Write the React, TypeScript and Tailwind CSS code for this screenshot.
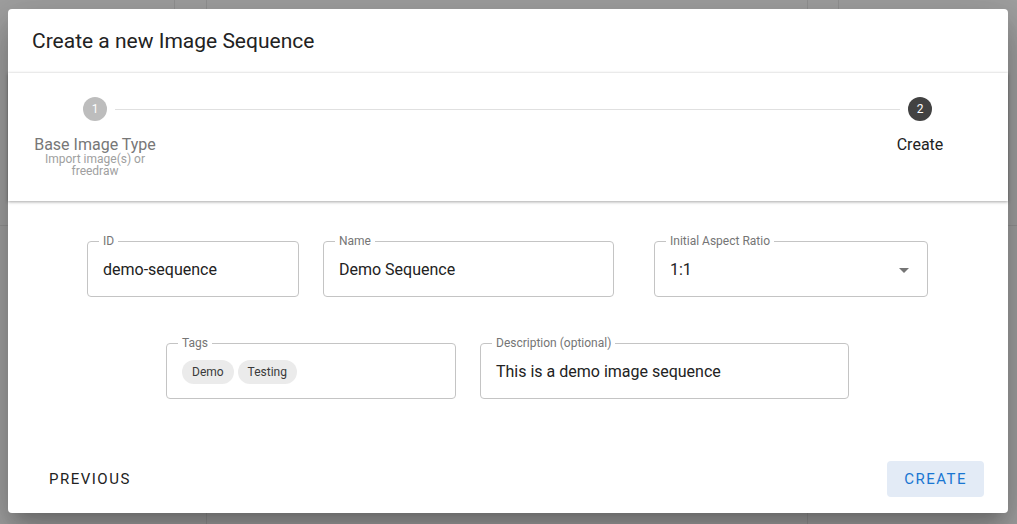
import React from "react";

function Field({ label, width, children }: { label: string; width: string; children: React.ReactNode }) {
  return (
    <div className={`relative h-[56px] ${width} rounded-[4px] border border-[#c4c4c4] flex items-center px-[15px] pt-[1px]`}>
      <span className="absolute left-[11px] top-[-8px] bg-white px-[4px] text-[12px] leading-[14px] text-[#757575]">
        {label}
      </span>
      {children}
    </div>
  );
}

function Chip({ label }: { label: string }) {
  return (
    <span className="h-[24px] rounded-full bg-[#ebebeb] px-[10px] flex items-center text-[12px] text-[#3a3a3a]">
      {label}
    </span>
  );
}

export default function App() {
  return (
    <div className="relative h-[524px] w-full overflow-hidden bg-[#a0a0a0] font-['Roboto',sans-serif]">
      {/* page behind the backdrop */}
      <div className="flex h-full">
        <div className="flex w-[207px] flex-col border-r border-[#939393]">
          <div className="flex h-[226px] border-b border-[#939393]">
            <div className="w-[175px] border-r border-[#939393]" />
          </div>
        </div>
        <div className="flex-1" />
        <div className="flex w-[210px] flex-col border-l border-[#939393]">
          <div className="flex h-[226px] justify-end border-b border-[#939393]">
            <div className="w-[179px] border-l border-[#939393]" />
          </div>
        </div>
      </div>

      {/* dialog */}
      <div className="absolute inset-0 pl-[8px] pt-[9px]">
        <div className="flex h-[504px] w-[1000px] flex-col rounded-[4px] bg-white shadow-[0_11px_15px_-7px_rgba(0,0,0,0.2),0_24px_38px_3px_rgba(0,0,0,0.14),0_9px_46px_8px_rgba(0,0,0,0.12)]">
          <h2 className="px-[24px] py-[16px] text-[21px] font-normal leading-[32px] text-[#222222]">
            Create a new Image Sequence
          </h2>

          {/* stepper */}
          <div className="px-[24px] pt-[24px] pb-[24px] shadow-[0_1px_3px_rgba(0,0,0,0.35),0_-1px_2px_rgba(0,0,0,0.04)]">
            <div className="flex items-center pl-[51px] pr-[52px]">
              <span className="flex h-[24px] w-[24px] items-center justify-center rounded-full bg-[#bdbdbd] text-[12px] text-white">
                1
              </span>
              <span className="mx-[8px] h-px flex-1 bg-[#e0e0e0]" />
              <span className="flex h-[24px] w-[24px] items-center justify-center rounded-full bg-[#424242] text-[12px] text-white">
                2
              </span>
            </div>
            <div className="flex justify-between">
              <div className="flex w-[126px] flex-col items-center text-center">
                <span className="mt-[14px] text-[16px] leading-[20px] text-[#777777]">Base Image Type</span>
                <span className="mt-[-2px] w-[110px] text-[12px] leading-[12px] text-[#a0a0a0]">
                  Import image(s) or freedraw
                </span>
              </div>
              <div className="flex w-[128px] flex-col items-center text-center">
                <span className="mt-[14px] text-[16px] leading-[20px] text-[#222222]">Create</span>
              </div>
            </div>
          </div>

          {/* form */}
          <div className="flex flex-1 flex-col pt-[40px] pr-[1px] text-[16px] text-[#222222]">
            <div className="flex justify-center">
              <Field label="ID" width="w-[212px]">
                <span>demo-sequence</span>
              </Field>
              <div className="ml-[24px]">
                <Field label="Name" width="w-[291px]">
                  <span>Demo Sequence</span>
                </Field>
              </div>
              <div className="ml-[40px]">
                <Field label="Initial Aspect Ratio" width="w-[274px]">
                  <span className="flex-1">1:1</span>
                  <svg viewBox="0 0 24 24" className="mr-[-4px] h-[24px] w-[24px] fill-[#757575]">
                    <path d="M7 10l5 5 5-5z" />
                  </svg>
                </Field>
              </div>
            </div>
            <div className="mt-[46px] flex justify-center gap-[24px]">
              <Field label="Tags" width="w-[290px]">
                <div className="flex gap-[4px]">
                  <Chip label="Demo" />
                  <Chip label="Testing" />
                </div>
              </Field>
              <Field label="Description (optional)" width="w-[369px]">
                <span>This is a demo image sequence</span>
              </Field>
            </div>
          </div>

          {/* actions */}
          <div className="flex items-center justify-between px-[24px] pb-[16px]">
            <button className="h-[36px] rounded-[4px] px-[17px] text-[15px] font-normal uppercase tracking-[1.5px] text-[#222222]">
              Previous
            </button>
            <button className="h-[36px] rounded-[4px] bg-[#e3ebf6] px-[17px] text-[15px] font-normal uppercase tracking-[1.5px] text-[#1976d2]">
              Create
            </button>
          </div>
        </div>
      </div>
    </div>
  );
}
